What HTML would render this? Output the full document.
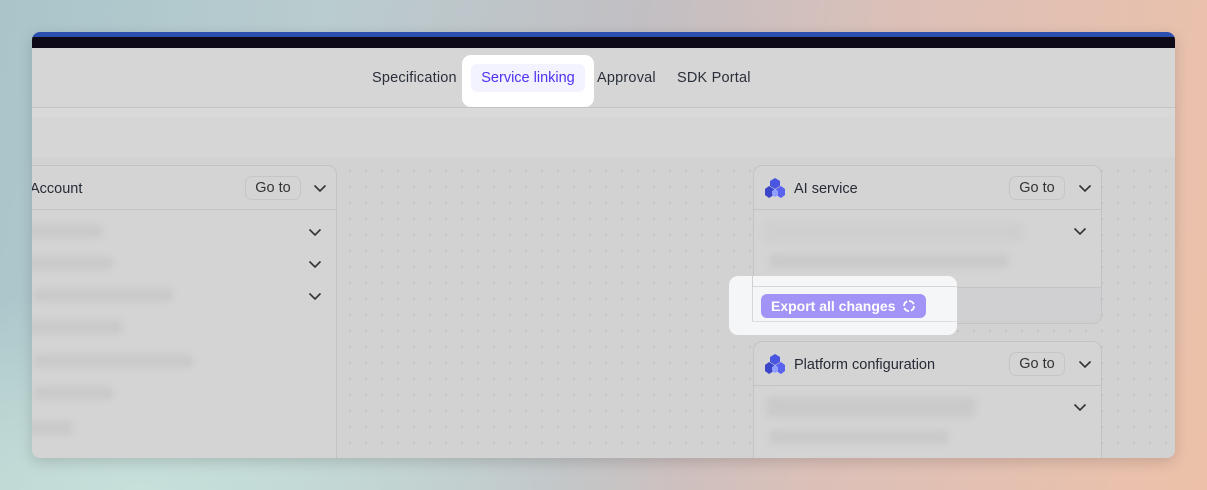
<!DOCTYPE html>
<html><head><style>
*{box-sizing:border-box;margin:0;padding:0}
body{width:1207px;height:490px;overflow:hidden;font-family:"Liberation Sans",sans-serif;position:relative;
background:linear-gradient(100deg,#a9c5ca 0%,#b9cccf 25%,#c2bfc3 50%,#dcc0b8 70%,#edc1a9 100%);}
.bl{position:absolute;left:0;bottom:0;width:700px;height:200px;background:radial-gradient(ellipse at 20% 100%,#c7e0da 0%,rgba(199,224,218,0) 70%)}
.win{position:absolute;left:32px;top:32px;width:1143px;height:426px;border-radius:8px;overflow:hidden;background:#d3d3d3;box-shadow:0 4px 14px rgba(0,0,0,.15)}
.top{height:5px;background:#2b4fae}
.dark{height:11px;background:#0e0a18}
.nav{height:60px;background:#d6d6d6;border-bottom:1px solid #c4c4c4;position:relative}
.nav span{position:absolute;top:22px;font-size:14.5px;color:#2a2f3a;letter-spacing:.2px}
.sub{height:9px;background:#d9d9d9}
.bar{height:40px;background:#d6d6d6}
.canvas{position:absolute;left:0;top:125px;width:100%;height:301px;background-color:#d2d2d2;background-image:radial-gradient(#c2c2c2 1px,transparent 1.2px);background-size:16px 16px;background-position:6px 6px}
.card{position:absolute;background:#d4d4d4;border:1px solid #c3c3c3;border-radius:9px;overflow:hidden}
.hd{height:44px;border-bottom:1px solid #c3c3c3;position:relative}
.hd .t{position:absolute;left:40px;top:15px;font-size:14.5px;color:#262b36}
.go{position:absolute;top:10px;width:56px;height:24px;border:1px solid #c6c6c6;border-radius:7px;font-size:14.5px;color:#333;text-align:center;line-height:23px}
.chev{position:absolute;width:14px;height:9px}
.blur{position:absolute;height:14px;background:#cacaca;border-radius:5px;filter:blur(3px)}
.hl{position:absolute;background:#fff;border-radius:9px}
</style></head><body>
<div class="bl"></div>
<div class="hl" style="left:462px;top:55px;width:132px;height:52px;z-index:2"></div>
<div class="win">
<div class="top"></div><div class="dark"></div>
<div class="nav">
<span style="left:340px">Specification</span>
<span style="left:565px">Approval</span>
<span style="left:645px">SDK Portal</span>
</div>
<div class="sub"></div><div class="bar"></div>
<div class="canvas"></div>
<div class="card" style="left:-10px;top:133px;width:315px;height:310px">
 <div class="hd"><span class="t" style="left:7px">Account</span><div class="go" style="left:222px">Go to</div>
 <svg class="chev" style="left:290px;top:18px" viewBox="0 0 14 9"><path d="M1.5 1.5 7 7l5.5-5.5" stroke="#333" stroke-width="1.6" fill="none"/></svg></div>
 <div class="blur" style="left:0;top:58px;width:80px"></div>
 <svg class="chev" style="left:285px;top:62px" viewBox="0 0 14 9"><path d="M1.5 1.5 7 7l5.5-5.5" stroke="#333" stroke-width="1.6" fill="none"/></svg>
 <div class="blur" style="left:0;top:90px;width:90px"></div>
 <svg class="chev" style="left:285px;top:94px" viewBox="0 0 14 9"><path d="M1.5 1.5 7 7l5.5-5.5" stroke="#333" stroke-width="1.6" fill="none"/></svg>
 <div class="blur" style="left:10px;top:122px;width:140px"></div>
 <svg class="chev" style="left:285px;top:126px" viewBox="0 0 14 9"><path d="M1.5 1.5 7 7l5.5-5.5" stroke="#333" stroke-width="1.6" fill="none"/></svg>
 <div class="blur" style="left:0;top:154px;width:100px"></div>
 <div class="blur" style="left:10px;top:188px;width:160px"></div>
 <div class="blur" style="left:10px;top:220px;width:80px"></div>
 <div class="blur" style="left:0;top:255px;width:50px"></div>
</div>
<div class="card" style="left:721px;top:133px;width:349px;height:159px">
 <div class="hd">
 <svg style="position:absolute;left:10px;top:11px" width="22" height="22" viewBox="0 0 22 22"><path d="M11 1 16 4v5l-5 3-5-3V4z" fill="#4a55e0"/><path d="M5 9l5 3v6l-5 3-4-3v-6z" fill="#3b45c9"/><path d="M17 9l4 3v6l-4 3-5-3v-6z" fill="#5963ef"/><path d="M11 12l3 2v4l-3 2-3-2v-4z" fill="#8fa0ff"/></svg>
 <span class="t">AI service</span><div class="go" style="left:255px">Go to</div>
 <svg class="chev" style="left:324px;top:18px" viewBox="0 0 14 9"><path d="M1.5 1.5 7 7l5.5-5.5" stroke="#333" stroke-width="1.6" fill="none"/></svg></div>
 <div class="blur" style="left:10px;top:56px;width:260px;height:20px;background:#cfcfcf"></div>
 <svg class="chev" style="left:319px;top:61px" viewBox="0 0 14 9"><path d="M1.5 1.5 7 7l5.5-5.5" stroke="#333" stroke-width="1.6" fill="none"/></svg>
 <div class="blur" style="left:15px;top:88px;width:240px"></div>
 <div style="position:absolute;left:0;top:121px;width:100%;height:38px;border-top:1px solid #c3c3c3;background:#d0d0d2"></div>
</div>
<div class="card" style="left:721px;top:309px;width:349px;height:140px">
 <div class="hd">
 <svg style="position:absolute;left:10px;top:11px" width="22" height="22" viewBox="0 0 22 22"><path d="M11 1 16 4v5l-5 3-5-3V4z" fill="#4a55e0"/><path d="M5 9l5 3v6l-5 3-4-3v-6z" fill="#3b45c9"/><path d="M17 9l4 3v6l-4 3-5-3v-6z" fill="#5963ef"/><path d="M11 12l3 2v4l-3 2-3-2v-4z" fill="#8fa0ff"/></svg>
 <span class="t">Platform configuration</span><div class="go" style="left:255px">Go to</div>
 <svg class="chev" style="left:324px;top:18px" viewBox="0 0 14 9"><path d="M1.5 1.5 7 7l5.5-5.5" stroke="#333" stroke-width="1.6" fill="none"/></svg></div>
 <div class="blur" style="left:12px;top:55px;width:210px;height:20px"></div>
 <svg class="chev" style="left:319px;top:61px" viewBox="0 0 14 9"><path d="M1.5 1.5 7 7l5.5-5.5" stroke="#333" stroke-width="1.6" fill="none"/></svg>
 <div class="blur" style="left:15px;top:88px;width:180px"></div>
</div>
</div>
<div class="hl" style="left:729px;top:276px;width:228px;height:59px;background:#f5f6f7;z-index:3">
 <div style="position:absolute;left:23px;top:0;width:205px;height:11px;border-left:1px solid #d0d0d0;border-bottom:1px solid #d6d6d6"></div>
 <div style="position:absolute;left:23px;top:11px;width:1px;height:34px;background:#d6d6d6"></div>
 <div style="position:absolute;left:23px;top:45px;width:205px;height:1px;background:#dedede"></div>
 <div style="position:absolute;left:32px;top:18px;width:165px;height:24px;border-radius:6px;background:#a293f7;color:#fff;font-size:14px;font-weight:bold;line-height:25px;padding-left:10px">Export all changes
 <svg style="position:absolute;left:141px;top:5px" width="14" height="14" viewBox="0 0 14 14"><path d="M7 2a5 5 0 0 1 5 5M12 7a5 5 0 0 1-5 5M7 12a5 5 0 0 1-5-5M2 7a5 5 0 0 1 5-5" stroke="#fff" stroke-width="1.8" fill="none" stroke-dasharray="6 2"/></svg></div>
</div>
<div style="position:absolute;left:471px;top:64px;width:114px;height:28px;border-radius:6px;background:#f3f2ff;z-index:3;color:#4b33f0;font-size:14.5px;line-height:29px;text-align:center">Service linking</div>
</body></html>
